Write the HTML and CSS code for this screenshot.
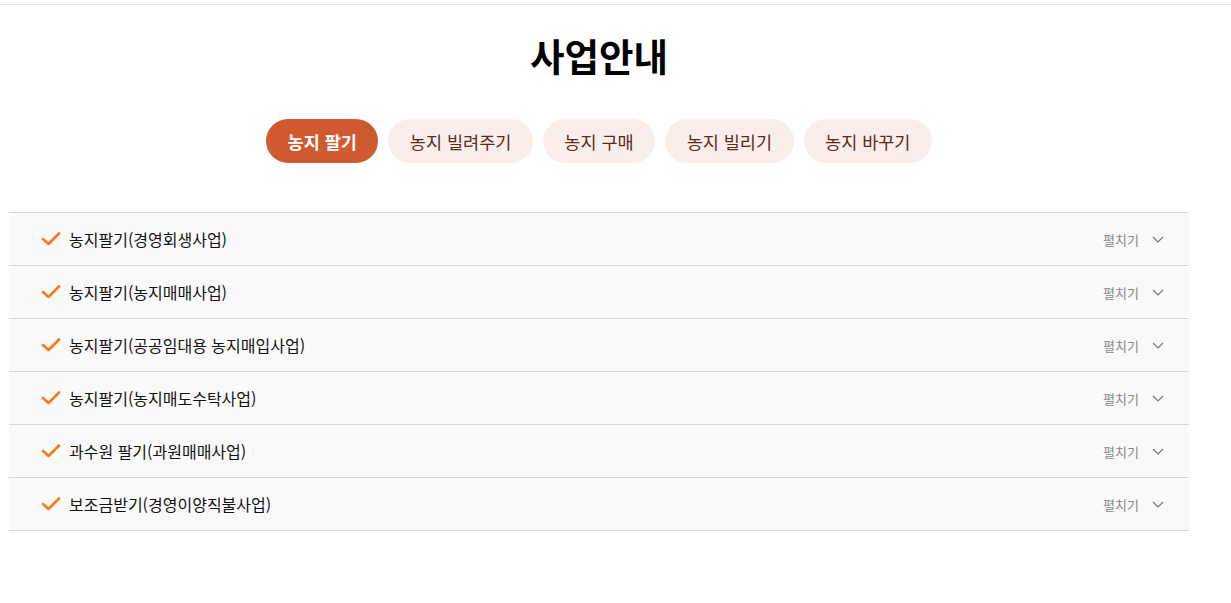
FILE: index.html
```html
<!DOCTYPE html>
<html lang="ko">
<head>
<meta charset="utf-8">
<title>사업안내</title>
<link rel="stylesheet" href="styles.css">
</head>
<body>
<div class="topbar"></div>
<main class="wrap">
  <h1 class="title">사업안내</h1>
  <nav class="tabs">
    <a class="tab active">농지 팔기</a>
    <a class="tab">농지 빌려주기</a>
    <a class="tab">농지 구매</a>
    <a class="tab">농지 빌리기</a>
    <a class="tab">농지 바꾸기</a>
  </nav>
  <ul class="acc">
    <li class="row"><svg class="check" viewBox="0 0 20 14" width="20" height="14"><path d="M2 7 L7.5 12 L18 1.5" fill="none" stroke="#f47a1f" stroke-width="2.6" stroke-linecap="round" stroke-linejoin="round"/></svg><span class="label">농지팔기(경영회생사업)</span><span class="more">펼치기</span><svg class="chev" viewBox="0 0 12 7" width="12" height="7"><path d="M1 1 L6 6 L11 1" fill="none" stroke="#777" stroke-width="1.2"/></svg></li>
    <li class="row"><svg class="check" viewBox="0 0 20 14" width="20" height="14"><path d="M2 7 L7.5 12 L18 1.5" fill="none" stroke="#f47a1f" stroke-width="2.6" stroke-linecap="round" stroke-linejoin="round"/></svg><span class="label">농지팔기(농지매매사업)</span><span class="more">펼치기</span><svg class="chev" viewBox="0 0 12 7" width="12" height="7"><path d="M1 1 L6 6 L11 1" fill="none" stroke="#777" stroke-width="1.2"/></svg></li>
    <li class="row"><svg class="check" viewBox="0 0 20 14" width="20" height="14"><path d="M2 7 L7.5 12 L18 1.5" fill="none" stroke="#f47a1f" stroke-width="2.6" stroke-linecap="round" stroke-linejoin="round"/></svg><span class="label">농지팔기(공공임대용 농지매입사업)</span><span class="more">펼치기</span><svg class="chev" viewBox="0 0 12 7" width="12" height="7"><path d="M1 1 L6 6 L11 1" fill="none" stroke="#777" stroke-width="1.2"/></svg></li>
    <li class="row"><svg class="check" viewBox="0 0 20 14" width="20" height="14"><path d="M2 7 L7.5 12 L18 1.5" fill="none" stroke="#f47a1f" stroke-width="2.6" stroke-linecap="round" stroke-linejoin="round"/></svg><span class="label">농지팔기(농지매도수탁사업)</span><span class="more">펼치기</span><svg class="chev" viewBox="0 0 12 7" width="12" height="7"><path d="M1 1 L6 6 L11 1" fill="none" stroke="#777" stroke-width="1.2"/></svg></li>
    <li class="row"><svg class="check" viewBox="0 0 20 14" width="20" height="14"><path d="M2 7 L7.5 12 L18 1.5" fill="none" stroke="#f47a1f" stroke-width="2.6" stroke-linecap="round" stroke-linejoin="round"/></svg><span class="label">과수원 팔기(과원매매사업)</span><span class="more">펼치기</span><svg class="chev" viewBox="0 0 12 7" width="12" height="7"><path d="M1 1 L6 6 L11 1" fill="none" stroke="#777" stroke-width="1.2"/></svg></li>
    <li class="row"><svg class="check" viewBox="0 0 20 14" width="20" height="14"><path d="M2 7 L7.5 12 L18 1.5" fill="none" stroke="#f47a1f" stroke-width="2.6" stroke-linecap="round" stroke-linejoin="round"/></svg><span class="label">보조금받기(경영이양직불사업)</span><span class="more">펼치기</span><svg class="chev" viewBox="0 0 12 7" width="12" height="7"><path d="M1 1 L6 6 L11 1" fill="none" stroke="#777" stroke-width="1.2"/></svg></li>
  </ul>
</main>
</body>
</html>
```
FILE: styles.css
```css
* { box-sizing: border-box; }
html, body { margin: 0; padding: 0; background: #fff; }
body {
  font-family: "Noto Sans CJK KR", "Noto Sans", sans-serif;
  color: #111;
}
.topbar {
  height: 5px;
  border-bottom: 1px solid #e3e3e3;
}
.wrap {
  width: 1180px;
  margin-left: 9px;
}
.title {
  margin: 25px 0 0;
  text-align: center;
  font-size: 37.5px;
  font-weight: 700;
  line-height: 50px;
  color: #000;
}
.tabs {
  display: flex;
  justify-content: center;
  gap: 10px;
  margin-top: 39px;
}
.tab {
  display: flex;
  align-items: center;
  height: 44px;
  padding: 0 21.5px;
  border-radius: 22px;
  background: #f9eeea;
  color: #5a2a1c;
  font-size: 17.5px;
  white-space: nowrap;
}
.tab.active {
  background: #d05a30;
  color: #fff;
  font-weight: 700;
}
.acc {
  list-style: none;
  margin: 49px 0 0;
  padding: 0;
  border-top: 1px solid #d6d6d6;
}
.row {
  display: flex;
  align-items: center;
  height: 53px;
  padding: 0 25px 0 32px;
  background: #f9f9f9;
  border-bottom: 1px solid #d6d6d6;
}
.check { flex: none; margin-right: 8px; }
.label {
  flex: 1;
  font-size: 16px;
  color: #111;
}
.more {
  font-size: 13px;
  color: #888;
  margin-right: 13px;
}
.chev { flex: none; }
```
